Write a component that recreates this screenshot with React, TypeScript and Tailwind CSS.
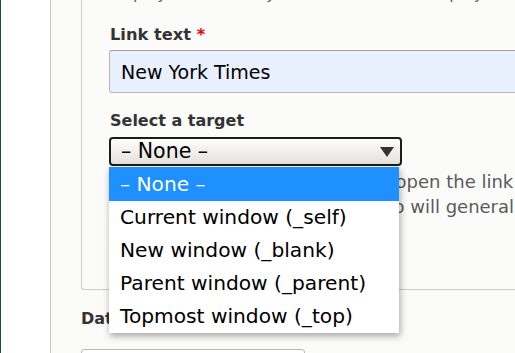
const TARGETS = [
  { key: '', label: '– None –' },
  { key: '_self', label: 'Current window (_self)' },
  { key: '_blank', label: 'New window (_blank)' },
  { key: '_parent', label: 'Parent window (_parent)' },
  { key: '_top', label: 'Topmost window (_top)' },
]

function Caret() {
  return (
    <svg width="14" height="10" viewBox="0 0 14 10" className="shrink-0">
      <path d="M0 0h14L7 10z" fill="#333" />
    </svg>
  )
}

export default function App() {
  const selected = ''

  return (
    <div className="flex h-[353px] w-[515px] overflow-hidden bg-white font-['DejaVu_Sans',sans-serif]">
      <div className="w-px bg-[#1d4a4c]" />
      <div className="w-[49px] bg-white" />
      <div className="flex min-w-0 flex-1 flex-col border-l border-[#c6c6c6] bg-[#fbfbf9] pl-[30px]">
        <fieldset className="flex flex-col rounded-bl-[3px] border-b border-l border-[#cccccc] pb-[70px] pl-[27px]">
          <p className="-mt-[18px] whitespace-nowrap pl-px text-[16px] leading-[24px] text-[#666]">
            display link text only. Enter “button” to display the link as a button.
          </p>

          <label className="mt-[17px] pl-px text-[16.3px] font-bold leading-[24px] text-[#333]">
            Link text <span className="text-[#e00]">*</span>
          </label>
          <input
            readOnly
            value="New York Times"
            className="mt-[3px] h-[43px] w-[420px] rounded-l-[3px] border border-[#b8b8b8] border-t-[#9e9e9e] bg-[#e8f0fe] px-[11px] text-[19px] text-black outline-none"
          />

          <label className="mt-[16px] pl-px text-[16px] font-bold leading-[24px] text-[#333]">
            Select a target
          </label>
          <div className="relative mt-[4px] w-[293px]">
            <div className="flex h-[29px] items-center justify-between rounded-[4px] border-2 border-[#1c1c1c] bg-linear-to-b from-[#fefefe] to-[#e3e1d9] pl-[10px] pr-[6px] text-[20.5px] text-black">
              <span>– None –</span>
              <Caret />
            </div>
            <ul className="absolute left-0 top-[30px] z-10 w-[290px] bg-white shadow-[1px_3px_7px_rgba(0,0,0,0.35)]">
              {TARGETS.map(({ key, label }) => (
                <li
                  key={key}
                  className={`flex items-center pl-[11px] text-[20.2px] ${
                    key === selected ? 'h-[34px] bg-[#1e90ff] text-white' : 'h-[33px] text-black'
                  }`}
                >
                  {label}
                </li>
              ))}
            </ul>
          </div>

          <div className="mt-[3px] whitespace-nowrap pl-px text-[18px] leading-[25px] text-[#5a5a5a]">
            <p>Choose the window in which to open the link in.</p>
            <p>Links sent to “New window” also will generally open in a new tab.</p>
          </div>
        </fieldset>

        <label className="mt-[17px] text-[16px] font-bold leading-[24px] text-[#333]">Date</label>
        <div className="mt-[18px] h-[40px] w-[224px] shrink-0 rounded-[3px] border border-[#b8b8b8] bg-white" />
      </div>
    </div>
  )
}
